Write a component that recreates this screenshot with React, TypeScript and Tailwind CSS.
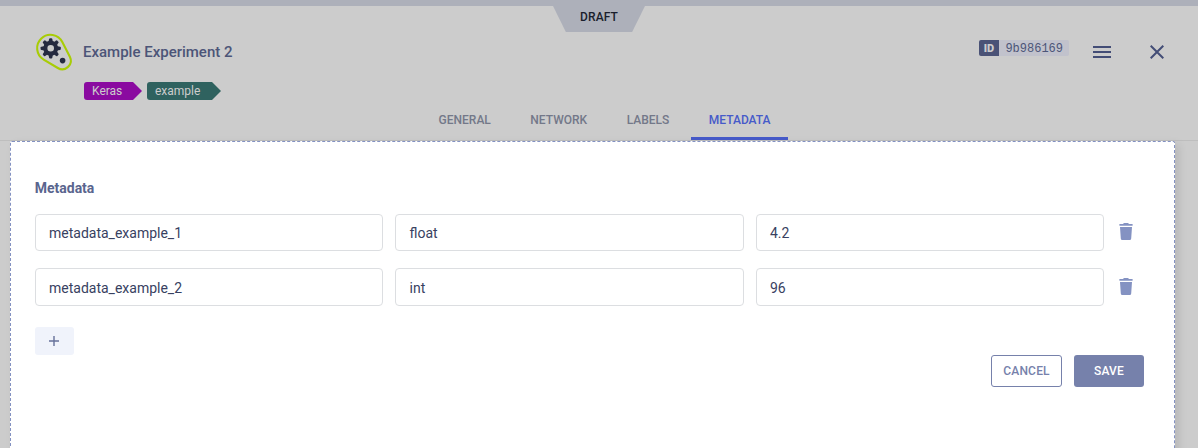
import React from "react";

const TEETH = [0, 45, 90, 135, 180, 225, 270, 315];

function ExperimentIcon() {
  return (
    <svg className="block h-[50px] w-[50px]" viewBox="30 28 50 50" fill="none">
      <path
        d="M62.3 42.1 A13.3 13.3 0 1 0 43.7 59.6 L57.8 68 A8.6 8.6 0 0 0 69.85 56.7 Z"
        stroke="#a8cc06"
        strokeWidth="2.1"
      />
      <circle cx="50.7" cy="48.3" r="5.4" stroke="#252a40" strokeWidth="4.2" />
      {TEETH.map((a) => (
        <path
          key={a}
          d="M48.4 42.4 L49.1 38.9 Q49.3 38.2 50 38.2 L51.4 38.2 Q52.1 38.2 52.3 38.9 L53 42.4 Z"
          fill="#252a40"
          transform={`rotate(${a} 50.7 48.3)`}
        />
      ))}
      <circle cx="62.6" cy="60.6" r="2.8" fill="#252a40" />
    </svg>
  );
}

function TrashIcon() {
  return (
    <svg className="block h-[18px] w-[14px]" viewBox="0 0 14 18" fill="#8492c2">
      <path d="M.4 1.1 H4 Q4.6 0 5.4 0 H8.6 Q9.4 0 10 1.1 H13.6 V2.8 H.4 Z" />
      <path d="M1 4.1 H13 L12.2 15.4 Q12.1 17 10.7 17 H3.3 Q1.9 17 1.8 15.4 Z" />
    </svg>
  );
}

function Tag({ label, width, color }: { label: string; width: string; color: string }) {
  return (
    <div className={`flex h-[18px] ${width}`}>
      <span className={`flex-1 rounded-l-[3px] pl-2 text-[12px] leading-[18px] text-[#cccccc] ${color}`}>{label}</span>
      <span className={`w-[9px] [clip-path:polygon(0_0,100%_50%,0_100%)] ${color}`} />
    </div>
  );
}

const tabs = ["GENERAL", "NETWORK", "LABELS", "METADATA"];
const rows = [
  { key: "metadata_example_1", type: "float", value: "4.2", height: "h-[37px]", gap: "", iconPad: "pt-[9px]" },
  { key: "metadata_example_2", type: "int", value: "96", height: "h-[38px]", gap: "mt-[17px]", iconPad: "pt-[10px]" },
];

function Field({ value, width }: { value: string; width: string }) {
  return (
    <div className={`flex h-full items-center rounded-[4px] border border-[#dcdee1] pt-[2px] text-[14px] text-[#384161] ${width}`}>
      {value}
    </div>
  );
}

export default function App() {
  return (
    <div className="flex h-[448px] w-[1198px] flex-col overflow-hidden bg-[#cccccc] font-['Roboto',sans-serif]">
      <div className="h-[6px] shrink-0 bg-[#adb0ba]" />
      <header className="flex h-[135px] shrink-0 flex-col border-b border-[#bebebe]">
        <div className="flex h-[96px] justify-between">
          <div className="flex w-[500px] pl-[30px] pt-[22px]">
            <ExperimentIcon />
            <div className="pl-[3px] pt-[14px]">
              <h1 className="text-[15px] font-medium leading-[20px] text-[#4c5578]">Example Experiment 2</h1>
              <div className="ml-px mt-[20px] flex gap-[5px]">
                <Tag label="Keras" width="w-[58px]" color="bg-[#8a0aa0]" />
                <Tag label="example" width="w-[74px]" color="bg-[#2f625f]" />
              </div>
            </div>
          </div>
          <div className="flex h-[26px] w-[92px] justify-center bg-[#adb0ba] text-[12px] font-medium leading-[22px] tracking-[0.1px] text-[#1a1e2c] [clip-path:polygon(0_0,100%_0,86%_100%,14%_100%)]">
            DRAFT
          </div>
          <div className="flex w-[500px] justify-end pt-[34px]">
            <div className="flex h-[16px] overflow-hidden rounded-[2px] text-[12px] leading-[16px]">
              <span className="w-5 bg-[#4a5276] text-center text-[11px] font-black leading-[17px] text-[#cccccc]">ID</span>
              <span className="w-[70px] bg-[#c1c2cc] pl-[6.4px] font-['Liberation_Mono',monospace] leading-[18px] text-[#4c5578]">9b986169</span>
            </div>
            <svg className="ml-[24px] mt-[6px] h-[12px] w-[18px]" viewBox="0 0 18 12" fill="#434d76">
              <path d="M0 0H18V2H0ZM0 5H18V7H0ZM0 10H18V12H0Z" />
            </svg>
            <svg className="ml-[39px] mr-[34px] mt-[5px] h-[14px] w-[14px]" viewBox="0 0 14 14" stroke="#434d76" strokeWidth="2">
              <path d="M.7 .7L13.3 13.3M13.3 .7L.7 13.3" />
            </svg>
          </div>
        </div>
        <nav className="flex h-[38px] gap-[3.5px] pl-[420.6px]">
          {tabs.map((t) => (
            <div
              key={t}
              className={`border-b-[3px] pl-[18px] pt-[9px] text-[12px] font-medium leading-[18px] ${
                t === "METADATA" ? "border-[#465ac9] pr-[17px] text-[#465ac9]" : "border-transparent pr-[18px] text-[#737889]"
              }`}
            >
              {t}
            </div>
          ))}
        </nav>
      </header>
      <main className="ml-[10px] h-[340px] w-[1165px] shrink-0 rounded-t-[2px] border border-dashed border-[#8492c2] bg-white px-[24px] pt-[36px] shadow-[4px_3px_8px_rgba(0,0,0,0.1)]">
        <h2 className="-ml-[0.3px] text-[14px] font-bold leading-[20px] text-[#5a658e]">Metadata</h2>
        <div className="mt-[16px]">
          {rows.map((r) => (
            <div key={r.key} className={`flex ${r.height} ${r.gap}`}>
              <Field value={r.key} width="w-[348px] pl-[13px]" />
              <div className="w-3" />
              <Field value={r.type} width="w-[349px] pl-[13.5px]" />
              <div className="w-3" />
              <Field value={r.value} width="w-[348px] pl-[13px]" />
              <div className={`pl-[15px] ${r.iconPad}`}>
                <TrashIcon />
              </div>
            </div>
          ))}
        </div>
        <button className="mt-[21px] flex h-[28px] w-[39px] items-center justify-center rounded-[3px] bg-[#f0f3fb] pr-px">
          <svg className="h-[10px] w-[10px]" viewBox="0 0 10 10" fill="#66719a">
            <path d="M4.3 0H5.7V4.3H10V5.7H5.7V10H4.3V5.7H0V4.3H4.3Z" />
          </svg>
        </button>
        <div className="flex justify-end gap-3 pr-[6px] text-[12px] font-medium tracking-[0.2px]">
          <button className="h-[32px] w-[71px] rounded-[3px] border border-[#7681ab] text-[#7681ab]">CANCEL</button>
          <button className="h-[32px] w-[70px] rounded-[3px] bg-[#7681ab] text-white">SAVE</button>
        </div>
      </main>
    </div>
  );
}
